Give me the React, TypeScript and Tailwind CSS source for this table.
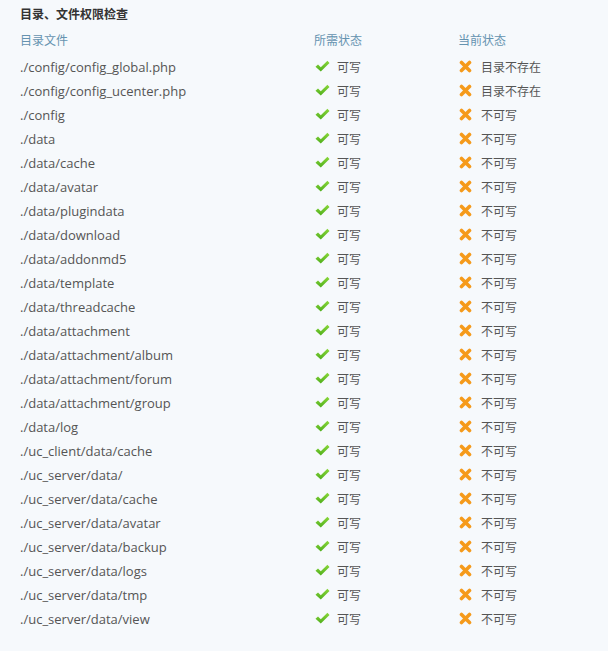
import React from 'react';

const files: { path: string; current: string }[] = [
  { path: './config/config_global.php', current: '目录不存在' },
  { path: './config/config_ucenter.php', current: '目录不存在' },
  { path: './config', current: '不可写' },
  { path: './data', current: '不可写' },
  { path: './data/cache', current: '不可写' },
  { path: './data/avatar', current: '不可写' },
  { path: './data/plugindata', current: '不可写' },
  { path: './data/download', current: '不可写' },
  { path: './data/addonmd5', current: '不可写' },
  { path: './data/template', current: '不可写' },
  { path: './data/threadcache', current: '不可写' },
  { path: './data/attachment', current: '不可写' },
  { path: './data/attachment/album', current: '不可写' },
  { path: './data/attachment/forum', current: '不可写' },
  { path: './data/attachment/group', current: '不可写' },
  { path: './data/log', current: '不可写' },
  { path: './uc_client/data/cache', current: '不可写' },
  { path: './uc_server/data/', current: '不可写' },
  { path: './uc_server/data/cache', current: '不可写' },
  { path: './uc_server/data/avatar', current: '不可写' },
  { path: './uc_server/data/backup', current: '不可写' },
  { path: './uc_server/data/logs', current: '不可写' },
  { path: './uc_server/data/tmp', current: '不可写' },
  { path: './uc_server/data/view', current: '不可写' },
];

function CheckIcon() {
  return (
    <svg width="15" height="13" viewBox="0 0 15 13" className="shrink-0">
      <defs>
        <linearGradient id="ok" x1="0" y1="0" x2="0" y2="1">
          <stop offset="0" stopColor="#8ad83a" />
          <stop offset="1" stopColor="#4fae1c" />
        </linearGradient>
      </defs>
      <path d="M0.5 6.8 L3 4.6 L5.8 7.2 L12.4 0.8 L14.5 3 L5.8 11.6 Z" fill="url(#ok)" />
    </svg>
  );
}

function CrossIcon() {
  return (
    <svg width="13" height="13" viewBox="0 0 13 13" className="shrink-0">
      <path
        d="M2.5 2.5 L10.5 10.5 M10.5 2.5 L2.5 10.5"
        stroke="#f59a1b"
        strokeWidth="3.6"
        strokeLinecap="round"
      />
    </svg>
  );
}

export default function App() {
  return (
    <div className="w-[608px] h-[651px] bg-[#f6f9fc] font-['Open_Sans','Noto_Sans_CJK_SC',sans-serif] text-[13px]">
      <div className="pl-[20px] pt-[4px]">
        <h2 className="h-[20px] leading-[20px] text-[12px] font-bold text-[#333] font-['Noto_Sans_CJK_SC',sans-serif]">目录、文件权限检查</h2>
        <div className="grid grid-cols-[294px_144px_1fr] h-[26px] items-end text-[12px] text-[#6593b0]">
          <span>目录文件</span>
          <span>所需状态</span>
          <span>当前状态</span>
        </div>
        <div className="mt-[6px]">
          {files.map((f, i) => (
            <div key={i} className="grid grid-cols-[294px_144px_1fr] h-[24px] items-center text-[#555]">
              <span>{f.path}</span>
              <span className="flex items-center">
                <span className="w-[23px] pl-[1px] -mt-[3px]">
                  <CheckIcon />
                </span>
                <span className="text-[12px]">可写</span>
              </span>
              <span className="flex items-center">
                <span className="w-[23px] pl-[1px] -mt-[3px]">
                  <CrossIcon />
                </span>
                <span className="text-[12px]">{f.current}</span>
              </span>
            </div>
          ))}
        </div>
      </div>
    </div>
  );
}
